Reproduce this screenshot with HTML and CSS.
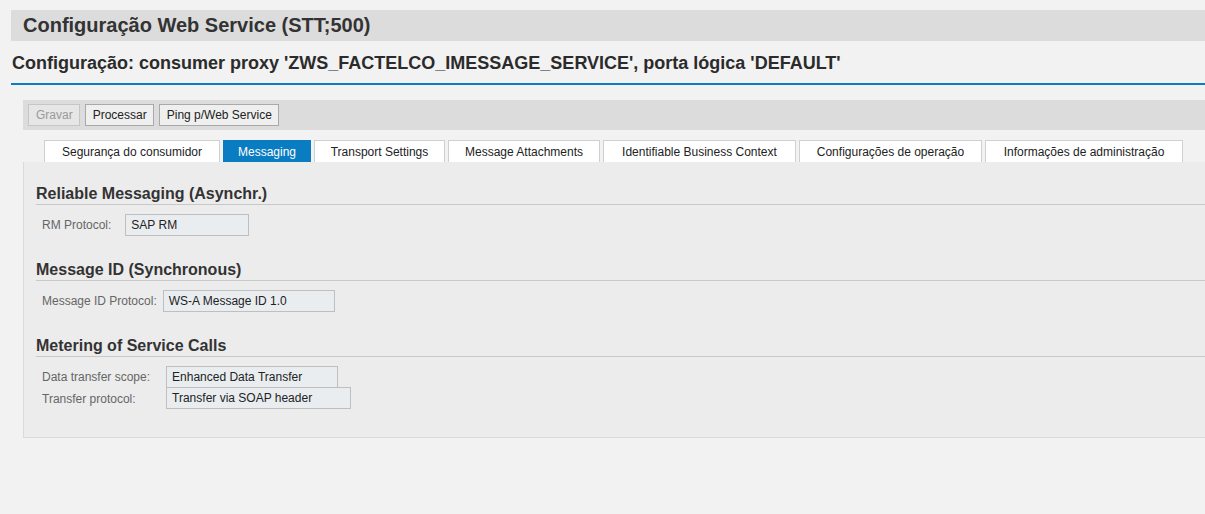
FILE: index.html
```html
<!DOCTYPE html>
<html lang="pt">
<head>
<meta charset="utf-8">
<title>Configuração Web Service</title>
<link rel="stylesheet" href="styles.css">
</head>
<body>
<div class="page">
  <div class="title-bar">Configuração Web Service (STT;500)</div>
  <div class="subtitle">Configuração: consumer proxy 'ZWS_FACTELCO_IMESSAGE_SERVICE', porta lógica 'DEFAULT'</div>
  <div class="content">
    <div class="toolbar">
      <button class="btn btn-disabled">Gravar</button>
      <button class="btn">Processar</button>
      <button class="btn">Ping p/Web Service</button>
    </div>
    <div class="tabs">
      <div class="tab t1">Segurança do consumidor</div>
      <div class="tab t2 active">Messaging</div>
      <div class="tab t3">Transport Settings</div>
      <div class="tab t4">Message Attachments</div>
      <div class="tab t5">Identifiable Business Context</div>
      <div class="tab t6">Configurações de operação</div>
      <div class="tab t7">Informações de administração</div>
    </div>
    <div class="panel">
      <section class="group">
        <h2 class="group-title">Reliable Messaging (Asynchr.)</h2>
        <div class="form form-rm">
          <span class="label">RM Protocol:</span>
          <span class="field w-rm">SAP RM</span>
        </div>
      </section>
      <section class="group">
        <h2 class="group-title">Message ID (Synchronous)</h2>
        <div class="form form-mid">
          <span class="label">Message ID Protocol:</span>
          <span class="field w-mid">WS-A Message ID 1.0</span>
        </div>
      </section>
      <section class="group">
        <h2 class="group-title">Metering of Service Calls</h2>
        <div class="form form-meter">
          <span class="label">Data transfer scope:</span>
          <span class="field w-scope">Enhanced Data Transfer</span>
          <span class="label">Transfer protocol:</span>
          <span class="field w-proto">Transfer via SOAP header</span>
        </div>
      </section>
    </div>
  </div>
</div>
</body>
</html>
```
FILE: styles.css
```css
html, body {
  margin: 0;
  padding: 0;
  background: #f2f2f2;
  overflow: hidden;
}
body {
  font-family: "Liberation Sans", Arial, sans-serif;
  color: #333;
}
.page {
  width: 1240px;
  padding-top: 10px;
}
.title-bar {
  margin-left: 11px;
  height: 31px;
  line-height: 31px;
  background: #dcdcdc;
  padding-left: 12px;
  font-size: 20px;
  font-weight: bold;
  color: #333;
}
.subtitle {
  margin-left: 11px;
  padding-left: 1px;
  height: 42px;
  line-height: 44px;
  font-size: 18px;
  font-weight: bold;
  color: #2b2b2b;
  border-bottom: 2px solid #0a7ec2;
}
.content {
  margin-left: 23px;
  padding-top: 15px;
}
.toolbar {
  display: flex;
  gap: 5px;
  height: 30px;
  align-items: center;
  padding-left: 5px;
  background: #dcdcdc;
}
.btn {
  height: 22px;
  padding: 0 6px 0 7px;
  font-family: inherit;
  font-size: 12px;
  color: #222;
  background: #efefef;
  border: 1px solid #a9a9a9;
  border-radius: 0;
}
.btn-disabled {
  color: #9a9a9a;
  border-color: #c6c6c6;
  background: #e6e6e6;
}
.tabs {
  display: flex;
  gap: 3px;
  margin-top: 10px;
  padding-left: 21px;
  height: 22px;
}
.tab {
  box-sizing: border-box;
  height: 22px;
  line-height: 22px;
  text-align: center;
  font-size: 12px;
  color: #222;
  background: #fff;
  border: 1px solid #d0d0d0;
  border-bottom: none;
}
.tab.active {
  background: #0a7cc1;
  border-color: #0a7cc1;
  color: #fff;
}
.t1 { width: 176px; }
.t2 { width: 88px; }
.t3 { width: 131px; }
.t4 { width: 152px; }
.t5 { width: 193px; }
.t6 { width: 183px; }
.t7 { width: 198px; }
.panel {
  background: #ececec;
  border: 1px solid #dadada;
  border-top: none;
  padding: 22px 0 28px 12px;
}
.group + .group {
  margin-top: 24px;
}
.group-title {
  margin: 0;
  height: 20px;
  line-height: 20px;
  font-size: 16px;
  font-weight: bold;
  color: #333;
  border-bottom: 1px solid #c8c8c8;
}
.form {
  display: grid;
  grid-template-columns: max-content max-content;
  column-gap: 14px;
  margin-top: 9px;
  padding-left: 6px;
  align-items: center;
}
.form-mid { column-gap: 6px; }
.form-meter { column-gap: 16px; }
.label {
  font-size: 12px;
  color: #666;
}
.field {
  box-sizing: border-box;
  height: 22px;
  line-height: 20px;
  padding-left: 5px;
  font-size: 12px;
  color: #222;
  background: #e9edf0;
  border: 1px solid #bfbfbf;
}
.field + .label + .field {
  margin-top: -1px;
}
.w-rm { width: 124px; }
.w-mid { width: 172px; }
.w-scope { width: 172px; }
.w-proto { width: 185px; }
```
